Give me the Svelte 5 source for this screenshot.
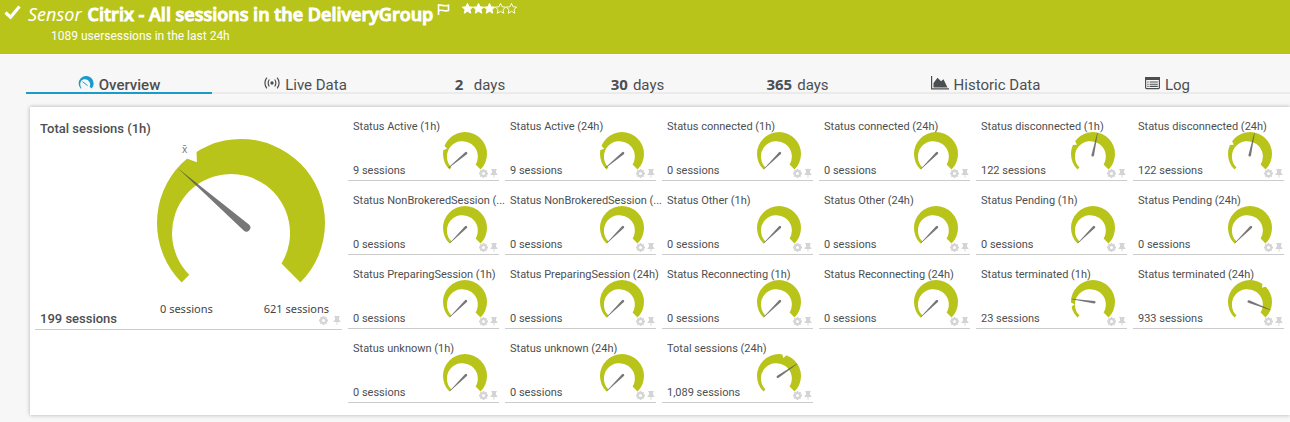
<script>
  const tabs = [
    { icon: 'gauge', label: 'Overview', active: true },
    { icon: 'live', label: 'Live Data' },
    { count: '2', label: 'days' },
    { count: '30', label: 'days' },
    { count: '365', label: 'days' },
    { icon: 'chart', label: 'Historic Data' },
    { icon: 'log', label: 'Log' }
  ];

  // needle and mean are clockwise angles measured from the nine o'clock position
  const channels = [
    { name: 'Status Active (1h)', value: '9', needle: -40, mean: 16 },
    { name: 'Status Active (24h)', value: '9', needle: -40, mean: 16 },
    { name: 'Status connected (1h)', value: '0', needle: -45 },
    { name: 'Status connected (24h)', value: '0', needle: -45 },
    { name: 'Status disconnected (1h)', value: '122', needle: 102, mean: 30 },
    { name: 'Status disconnected (24h)', value: '122', needle: 102, mean: 30 },
    { name: 'Status NonBrokeredSession (...', value: '0', needle: -45 },
    { name: 'Status NonBrokeredSession (...', value: '0', needle: -45 },
    { name: 'Status Other (1h)', value: '0', needle: -45 },
    { name: 'Status Other (24h)', value: '0', needle: -45 },
    { name: 'Status Pending (1h)', value: '0', needle: -45 },
    { name: 'Status Pending (24h)', value: '0', needle: -45 },
    { name: 'Status PreparingSession (1h)', value: '0', needle: -45 },
    { name: 'Status PreparingSession (24h)', value: '0', needle: -45 },
    { name: 'Status Reconnecting (1h)', value: '0', needle: -45 },
    { name: 'Status Reconnecting (24h)', value: '0', needle: -45 },
    { name: 'Status terminated (1h)', value: '23', needle: 8, mean: -7 },
    { name: 'Status terminated (24h)', value: '933', needle: 201, mean: 130 },
    { name: 'Status unknown (1h)', value: '0', needle: -45 },
    { name: 'Status unknown (24h)', value: '0', needle: -45 },
    { name: 'Total sessions (24h)', value: '1,089', needle: 146, mean: 104 }
  ];

  const star = 'M6 .4 7.7 4.1 11.7 4.5 8.7 7.2 9.6 11.2 6 9.1 2.4 11.2 3.3 7.2 .3 4.5 4.3 4.1Z';
  const dial = 'M-59.4 59.4A84 84 0 1 1 59.4 59.4L40.5 40.5A59 59 0 1 0 -51.7 51.7Z';
</script>

{#snippet gauge(needle, mean, small)}
  <svg class="gauge" viewBox="-84 -84 168 168" aria-hidden="true">
    <path class="dial" d={dial} />
    {#if mean !== undefined}
      <path
        class="mean"
        d={small ? 'M-71 0-88-11V11Z' : 'M-75 0-87-8V8Z'}
        transform="rotate({mean})"
      />
    {/if}
    <path
      class="needle"
      d={small ? 'M-82-1 5-5A5 5 0 0 1 5 5L-82 1Z' : 'M-84 0 7-4A4 4 0 0 1 7 4Z'}
      transform="rotate({needle})"
    />
  </svg>
{/snippet}

{#snippet tools(name)}
  <div class="tools">
    <button type="button" aria-label="Settings: {name}">
      <svg width="9" height="9" viewBox="0 0 10 10">
        <g stroke="currentColor" stroke-width="2">
          <path d="M5 0V10M0 5H10M1.5 1.5 8.5 8.5M8.5 1.5 1.5 8.5" />
        </g>
        <circle cx="5" cy="5" r="3.8" fill="currentColor" />
        <circle cx="5" cy="5" r="1.7" fill="#fff" />
      </svg>
    </button>
    <button type="button" aria-label="Pin: {name}">
      <svg width="8" height="9" viewBox="0 0 8 10">
        <path fill="currentColor" d="M1 0H7V1.3H6.2V4.2Q8 5 8 6.7H4.6L4.3 10H3.7L3.4 6.7H0Q0 5 1.8 4.2V1.3H1Z" />
      </svg>
    </button>
  </div>
{/snippet}

<header>
  <svg class="check" width="17" height="17" viewBox="0 0 17 17" aria-hidden="true">
    <path d="M1.5 8.5 6.5 13.2 15.5 2.5" fill="none" stroke="#fff" stroke-width="3.2" />
  </svg>
  <div class="heading">
    <h1>
      <em>Sensor</em>
      <span class="name">Citrix - All sessions in the DeliveryGroup</span>
      <button class="flag" type="button" aria-label="Flag">
        <svg width="13" height="11" viewBox="0 0 13 11">
          <path d="M1.5 0V11M1.5 1.5C4 0 6.5 3 11.5 1.3V6.5C7 8 5 5 1.5 6.8" fill="none" stroke="#fff" stroke-width="1.6" />
        </svg>
      </button>
      <span class="stars" role="img" aria-label="3 of 5 stars">
        {#each [1, 2, 3, 4, 5] as n}
          <svg width="11" height="11" viewBox="0 0 12 12">
            <path d={star} fill={n <= 3 ? '#fff' : 'none'} stroke="#fff" stroke-width="1" />
          </svg>
        {/each}
      </span>
    </h1>
    <p>1089 usersessions in the last 24h</p>
  </div>
</header>

<nav>
  {#each tabs as tab}
    <a href="#{tab.count ?? ''}{tab.label}" class:active={tab.active}>
      {#if tab.icon === 'gauge'}
        <svg width="16" height="14" viewBox="0 0 16 14" aria-hidden="true">
          <path d="M2.8 12.7A7.5 7.5 0 1 1 13.7 12.5L11.6 10.8A5.2 5.2 0 0 0 7.4 3.3C2.7 2.8 .8 8 3.4 12.2Z" fill="#1a9bcb" />
          <path d="M4.4 5.6 9.6 9.6" stroke="#1a9bcb" stroke-width="1" />
        </svg>
      {:else if tab.icon === 'live'}
        <svg width="16" height="14" viewBox="0 0 16 14" fill="none" stroke="#4c4f51" stroke-width="1.2" aria-hidden="true">
          <circle cx="8" cy="7" r="1.7" fill="#4c4f51" stroke="none" />
          <path d="M5.3 3.5Q3 7 5.3 10.5M10.7 3.5Q13 7 10.7 10.5M2.8 1.7Q-1 7 2.8 12.3M13.2 1.7Q17 7 13.2 12.3" />
        </svg>
      {:else if tab.icon === 'chart'}
        <svg width="18" height="14" viewBox="0 0 18 14" aria-hidden="true">
          <path d="M.6 0V12.9H18" fill="none" stroke="#4c4f51" stroke-width="1.2" />
          <path d="M2.5 11.5V7L6.5 1.8 10 5.3 12.5 3.3 16.5 11.5Z" fill="#4c4f51" />
        </svg>
      {:else if tab.icon === 'log'}
        <svg width="15" height="14" viewBox="0 0 15 14" aria-hidden="true">
          <rect x=".6" y="1.6" width="13.8" height="11" rx="1" fill="none" stroke="#4c4f51" stroke-width="1.2" />
          <path d="M0 1H15V4H0Z" fill="#4c4f51" />
          <path d="M2.3 6H3.6M4.6 6H12.8M2.3 8.2H3.6M4.6 8.2H12.8M2.3 10.4H3.6M4.6 10.4H12.8" stroke="#4c4f51" stroke-width="1.1" />
        </svg>
      {:else}
        <b>{tab.count}</b>
      {/if}
      <span>{tab.label}</span>
    </a>
  {/each}
</nav>

<main>
  <section class="tile primary">
    <h2>Total sessions (1h)</h2>
    <div class="dialbox">
      {@render gauge(41, 54, false)}
      <span class="xbar">x̄</span>
      <div class="range"><span>0 sessions</span><span>621 sessions</span></div>
    </div>
    <p>199 sessions</p>
    {@render tools('Total sessions (1h)')}
  </section>
  <div class="channels">
    {#each channels as c}
      <section class="tile">
        <h2>{c.name}</h2>
        {@render gauge(c.needle, c.mean, true)}
        <p>{c.value} sessions</p>
        {@render tools(c.name)}
      </section>
    {/each}
  </div>
</main>

<style>
  :global(body) {
    background: #f7f7f7;
    color: #4c4f51;
    font-family: Roboto, sans-serif;
  }
  h1, h2, p {
    margin: 0;
    font-weight: 400;
  }
  button {
    display: block;
    padding: 0;
    border: 0;
    background: none;
    color: inherit;
  }
  svg {
    display: block;
  }
  header {
    display: flex;
    gap: 7px;
    height: 54px;
    padding: 0 4px;
    box-sizing: border-box;
    background: #b8c41a;
    color: #fff;
  }
  .check {
    margin-top: 4px;
  }
  h1 {
    display: flex;
    gap: 6px;
    height: 28px;
    font: 400 18px/28px "Noto Sans", sans-serif;
    white-space: nowrap;
  }
  .name {
    font-family: "Open Sans", sans-serif;
    font-weight: 600;
    -webkit-text-stroke: 1px #fff;
  }
  .flag {
    align-self: flex-start;
    margin: 4px 0 0 -2px;
  }
  .stars {
    display: flex;
    margin: 3px 0 0 6px;
  }
  header p {
    padding-left: 23px;
    font-size: 12px;
    line-height: 16px;
  }
  nav {
    display: grid;
    grid-template-columns: 186fr 187fr 162fr 153fr 167fr 209fr 155fr 45fr;
    height: 40px;
    margin-left: 26px;
    box-sizing: border-box;
    border-bottom: 2px solid #ebebeb;
  }
  nav a {
    display: flex;
    justify-content: center;
    align-items: flex-end;
    gap: 5px;
    height: 38px;
    border-bottom: 2px solid transparent;
    color: inherit;
    font-size: 15px;
    line-height: 14px;
    text-decoration: none;
    white-space: nowrap;
  }
  nav a.active {
    border-color: #1a9bcb;
    font-weight: 500;
  }
  nav svg {
    margin-bottom: 2px;
  }
  nav b {
    min-width: 14px;
    margin-bottom: 1px;
    font-family: "Noto Sans", sans-serif;
  }
  main {
    display: grid;
    grid-template-columns: 307fr 936fr;
    align-items: start;
    gap: 6px;
    margin: 13px 0 6px 30px;
    padding: 5px 6px 12px 5px;
    background: #fff;
    box-shadow: 0 0 4px rgba(0, 0, 0, 0.3);
  }
  .channels {
    display: grid;
    grid-template-columns: repeat(6, minmax(0, 1fr));
    grid-auto-rows: 69px;
    gap: 5px 6px;
  }
  .tile {
    position: relative;
    display: flex;
    flex-direction: column;
    justify-content: space-between;
    box-sizing: border-box;
    border-bottom: 1px solid #ccc;
    padding: 7px 0 1px 5px;
    font-size: 11px;
    line-height: 16px;
  }
  h2 {
    position: relative;
    z-index: 1;
    font-size: inherit;
    white-space: nowrap;
  }
  .gauge {
    overflow: visible;
  }
  .tile > .gauge {
    position: absolute;
    top: 20px;
    right: 12px;
    width: 44px;
    height: 44px;
  }
  .dial {
    fill: #b8c41a;
  }
  .mean {
    fill: #fff;
  }
  .needle {
    fill: #555;
    fill-opacity: 0.8;
  }
  .tools {
    position: absolute;
    right: 1px;
    bottom: 2px;
    display: flex;
    gap: 2px;
    color: #d4d4d6;
  }
  .primary {
    height: 218px;
    padding-top: 9px;
    padding-bottom: 2px;
    font-size: 13px;
  }
  .primary h2, .primary p {
    font-weight: 500;
  }
  .primary .tools {
    gap: 5px;
    bottom: 4px;
  }
  .dialbox {
    position: absolute;
    top: 27px;
    right: 13px;
    display: flex;
    flex-direction: column;
    align-items: center;
    width: 176px;
  }
  .dialbox .gauge {
    width: 168px;
    height: 168px;
  }
  .xbar {
    position: absolute;
    top: 2px;
    left: 29px;
    color: #777;
    font: 10px/16px "Noto Sans", sans-serif;
  }
  .range {
    display: flex;
    justify-content: space-between;
    align-self: stretch;
    margin: -6px 0 0 7px;
    color: #444;
    font: 11px/16px "Noto Sans", sans-serif;
  }
</style>
